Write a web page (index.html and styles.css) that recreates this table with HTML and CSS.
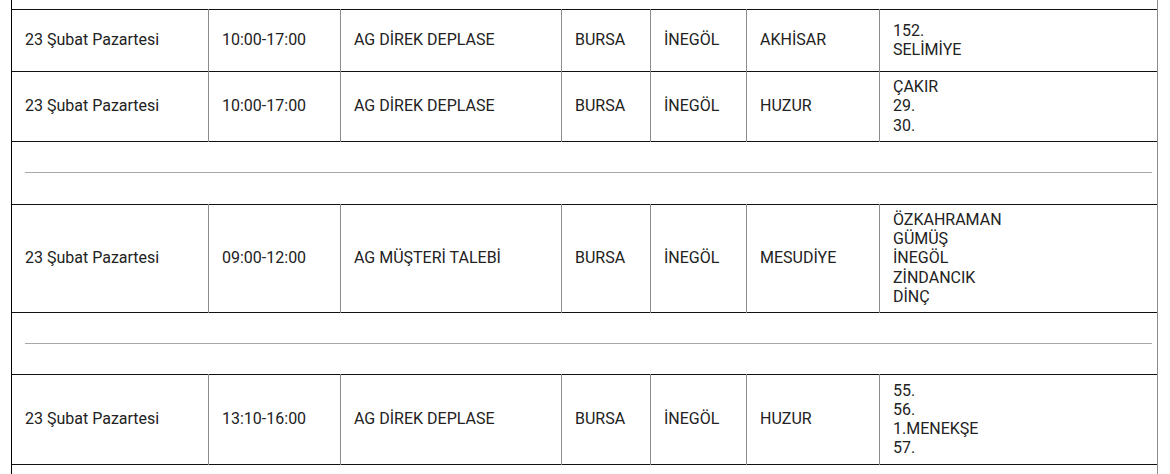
FILE: index.html
```html
<!DOCTYPE html>
<html lang="tr">
<head>
<meta charset="utf-8">
<title>Kesinti Programı</title>
<link rel="stylesheet" href="styles.css">
</head>
<body>
<table class="schedule">
  <colgroup>
    <col class="c-date"><col class="c-time"><col class="c-type"><col class="c-city"><col class="c-district"><col class="c-hood"><col class="c-streets">
  </colgroup>
  <tbody>
    <tr class="row-edge-top"><td colspan="7" class="sep-cell"></td></tr>
    <tr class="row-h62">
      <td>23 Şubat Pazartesi</td><td>10:00-17:00</td><td>AG DİREK DEPLASE</td><td>BURSA</td><td>İNEGÖL</td><td>AKHİSAR</td>
      <td>152.<br>SELİMİYE</td>
    </tr>
    <tr class="row-h70">
      <td>23 Şubat Pazartesi</td><td>10:00-17:00</td><td>AG DİREK DEPLASE</td><td>BURSA</td><td>İNEGÖL</td><td>HUZUR</td>
      <td>ÇAKIR<br>29.<br>30.</td>
    </tr>
    <tr class="row-sep"><td colspan="7" class="sep-cell"><hr class="divider"></td></tr>
    <tr class="row-h108">
      <td>23 Şubat Pazartesi</td><td>09:00-12:00</td><td>AG MÜŞTERİ TALEBİ</td><td>BURSA</td><td>İNEGÖL</td><td>MESUDİYE</td>
      <td>ÖZKAHRAMAN<br>GÜMÜŞ<br>İNEGÖL<br>ZİNDANCIK<br>DİNÇ</td>
    </tr>
    <tr class="row-sep row-sep-short"><td colspan="7" class="sep-cell"><hr class="divider"></td></tr>
    <tr class="row-h90">
      <td>23 Şubat Pazartesi</td><td>13:10-16:00</td><td>AG DİREK DEPLASE</td><td>BURSA</td><td>İNEGÖL</td><td>HUZUR</td>
      <td>55.<br>56.<br>1.MENEKŞE<br>57.</td>
    </tr>
    <tr class="row-edge-bottom"><td colspan="7" class="sep-cell"></td></tr>
  </tbody>
</table>
</body>
</html>
```

FILE: styles.css
```css
html, body {
  margin: 0;
  padding: 0;
  background: #fff;
}

.schedule {
  border-collapse: collapse;
  table-layout: fixed;
  width: 1147px;
  margin-left: 11px;
  font-family: Roboto, "Liberation Sans", sans-serif;
  font-size: 16px;
  line-height: 1.2;
  color: #222;
}

.c-date { width: 197px; }
.c-time { width: 132px; }
.c-type { width: 221px; }
.c-city { width: 89px; }
.c-district { width: 96px; }
.c-hood { width: 133px; }
.c-streets { width: 278px; }

.schedule tr {
  border-top: 1px solid #111;
}

.schedule td {
  padding: 0 13px;
  vertical-align: middle;
  border-left: 1px solid #8c8c8c;
  border-right: 1px solid #8c8c8c;
}

.schedule td:first-child {
  border-left: 1px solid #000;
}

.schedule .sep-cell {
  padding: 0 5px 0 13px;
}

.schedule .row-edge-top { border-top: none; height: 9px; }
.row-h62 { height: 62px; }
.row-h70 { height: 70px; }
.row-sep { height: 63px; }
.row-sep-short { height: 62px; }
.row-h108 { height: 108px; }
.row-h90 { height: 90px; }
.row-edge-bottom { height: 20px; }

.divider {
  margin: 0;
  border: 0;
  border-top: 1px solid #a8a8a8;
  height: 0;
}
```
